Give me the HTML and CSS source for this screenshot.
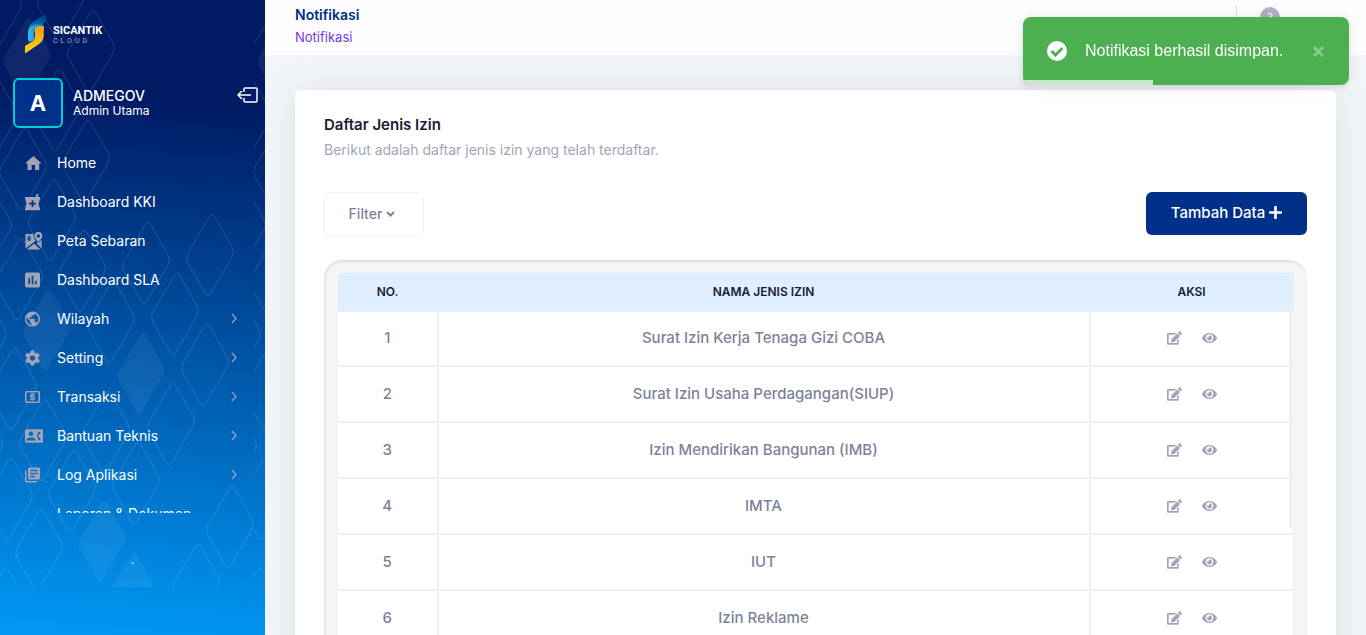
FILE: index.html
```html
<!DOCTYPE html>
<html lang="id">
<head>
<meta charset="utf-8">
<meta name="viewport" content="width=device-width, initial-scale=1">
<title>Daftar Jenis Izin</title>
<link rel="stylesheet" href="styles.css">
</head>
<body>
<svg class="defs" aria-hidden="true">
  <defs>
    <path id="diamond" d="M-1-38Q2-43 5-38L22-8Q25-3 22 2L1 38Q-2 43-5 38L-22 8Q-25 3-22-2Z"/>
    <clipPath id="tile-clip"><rect width="254" height="587"/></clipPath>
    <g id="tile" clip-path="url(#tile-clip)">
      <g class="line">
        <use href="#diamond" x="-2" y="8"/><use href="#diamond" x="61" y="0"/><use href="#diamond" x="91" y="51"/>
        <use href="#diamond" x="57" y="110"/><use href="#diamond" x="86" y="161"/><use href="#diamond" x="23" y="169"/>
        <use href="#diamond" x="-6" y="118"/><use href="#diamond" x="52" y="220"/><use href="#diamond" x="-12" y="228"/>
        <use href="#diamond" x="82" y="271"/><use href="#diamond" x="146" y="263"/><use href="#diamond" x="210" y="255"/>
        <use href="#diamond" x="19" y="279"/><use href="#diamond" x="175" y="314"/><use href="#diamond" x="111" y="322"/>
        <use href="#diamond" x="205" y="365"/><use href="#diamond" x="13" y="389"/><use href="#diamond" x="-17" y="337"/>
        <use href="#diamond" x="106" y="432"/><use href="#diamond" x="171" y="424"/><use href="#diamond" x="43" y="440"/>
        <use href="#diamond" x="-21" y="448"/><use href="#diamond" x="72" y="491"/><use href="#diamond" x="136" y="483"/>
        <use href="#diamond" x="9" y="499"/><use href="#diamond" x="39" y="550"/><use href="#diamond" x="230" y="527"/>
        <use href="#diamond" x="196" y="585"/><use href="#diamond" x="4" y="609"/>
      </g>
      <g class="solid">
        <use href="#diamond" x="27" y="58"/><use href="#diamond" x="47" y="330"/><use href="#diamond" x="141" y="373"/>
        <use href="#diamond" x="102" y="541"/><use href="#diamond" x="132" y="593"/>
      </g>
    </g>
    <symbol id="chevron" viewBox="0 0 6 11"><path d="M1 1l4 4.500-4 4.500" fill="none" stroke="currentColor" stroke-width="1.200"/></symbol>
    <symbol id="edit" viewBox="0 0 576 512"><path fill="currentColor" d="M402.600 83.200l90.200 90.200c3.800 3.800 3.800 10 0 13.800L274.400 405.600l-92.800 10.300c-12.400 1.400-22.900-9.100-21.500-21.500l10.300-92.800L388.800 83.200c3.800-3.800 10-3.800 13.800 0zm162-22.900l-48.800-48.800c-15.200-15.200-39.900-15.200-55.200 0l-35.400 35.400c-3.800 3.800-3.800 10 0 13.800l90.200 90.200c3.800 3.800 10 3.800 13.800 0l35.400-35.400c15.200-15.300 15.200-40 0-55.200zM384 346.200V448H64V128h229.800c3.200 0 6.200-1.300 8.500-3.500l40-40c7.600-7.600 2.200-20.500-8.500-20.500H48C21.500 64 0 85.500 0 112v352c0 26.500 21.500 48 48 48h352c26.500 0 48-21.500 48-48V306.200c0-10.700-12.900-16-20.500-8.500l-40 40c-2.200 2.300-3.500 5.300-3.500 8.500z"/></symbol>
    <symbol id="eye" viewBox="0 0 576 512"><path fill="currentColor" d="M572.520 241.400C518.290 135.590 410.930 64 288 64S57.680 135.640 3.480 241.410a32.350 32.350 0 0 0 0 29.190C57.710 376.410 165.070 448 288 448s230.320-71.640 284.520-177.410a32.350 32.350 0 0 0 0-29.190zM288 400a144 144 0 1 1 144-144 143.930 143.930 0 0 1-144 144zm0-240a95.310 95.310 0 0 0-25.310 3.790 47.850 47.850 0 0 1-66.900 66.900A95.780 95.780 0 1 0 288 160z"/></symbol>
    <linearGradient id="logo-dark" x1="1" y1="0" x2="0" y2="1"><stop offset="0" stop-color="#003a80"/><stop offset="1" stop-color="#0079b8"/></linearGradient>
    <linearGradient id="logo-blue"><stop offset="0" stop-color="#35bdf2"/><stop offset="1" stop-color="#0072c0"/></linearGradient>
    <linearGradient id="logo-gold" x1="0" y1="0" x2="0" y2="1"><stop offset="0" stop-color="#f59c1c"/><stop offset="1" stop-color="#ffd60a"/></linearGradient>
  </defs>
</svg>

<div class="app">
  <aside class="sidebar">
    <svg class="pattern" aria-hidden="true"><use href="#tile"/><use href="#tile" x="254"/></svg>

    <div class="brand">
      <svg class="brand-mark" viewBox="0 0 21 40" aria-hidden="true">
        <path fill="url(#logo-dark)" d="M21 0v8L9 13l-5 1q0-3 4-6z"/>
        <path fill="url(#logo-blue)" d="M3 18q0-5 6-7l9-2v3l-6 2q-3 2-3 7v5l-5 2q-1-2-1-5z"/>
        <path fill="url(#logo-gold)" d="M10 14l3-2h6l-.3 11q-.7 4-4 6.500L0 39.500V32l8-5q2-1.500 2-5z"/>
      </svg>
      <div class="brand-text"><span class="brand-name">SICANTIK</span><span class="brand-sub">CLOUD</span></div>
    </div>

    <div class="user">
      <div class="avatar">A</div>
      <div class="user-text"><span class="user-name">ADMEGOV</span><span class="user-role">Admin Utama</span></div>
      <button class="logout" type="button" aria-label="Keluar">
        <svg viewBox="0 0 21 16" fill="none" stroke="currentColor" stroke-width="1.500"><path d="M7 5V2q0-1 1-1h11q1 0 1 1v12q0 1-1 1H8q-1 0-1-1v-3M1 8h13M5 4L1 8l4 4"/></svg>
      </button>
    </div>

    <nav class="menu">
      <a class="item" href="#"><svg class="icon" viewBox="2 .7 21.600 21.600"><path d="M10 20v-6h4v6h5v-8h3L12 3 2 12h3v8z"/></svg><span>Home</span></a>
      <a class="item" href="#"><svg class="icon" viewBox="3 .2 21.600 21.600"><path d="M21 5h-2.640l1.140-3.140L17.150 1l-1.460 4H3v2l2 6-2 6v2h18v-2l-2-6 2-6V5zm-5 9h-3v3h-2v-3H8v-2h3V9h2v3h3v2z"/></svg><span>Dashboard KKI</span></a>
      <a class="item" href="#"><svg class="icon" viewBox="0 0 18 19"><path fill-rule="evenodd" d="M1 2h7.500c-.2 3.500.7 5 2.300 7.200L0 17.500V3q0-1 1-1zM5 4.300c-1.700-1.200-3.300.2-2.600 1.900-1 1-.6 3 .9 3.200 1.900.2 3-1.700 1.900-3.100.6-.5.5-1.300-.2-2zM4 5a.7.700 0 1 1 0 1.400A.7.700 0 0 1 4 5zm-.2 2.400a.7.700 0 1 1 0 1.400.7.700 0 0 1 0-1.400zM9 12.200l6.800 6.300H1.500zM13.600 12l3.400-4v9.500L11.500 12l1-1zM13.600 0A4.200 4.200 0 0 1 17.800 4.200C17.800 7 14.500 8.500 13.600 11.500 12.700 8.500 9.400 7 9.400 4.200A4.200 4.200 0 0 1 13.600 0zm0 2.400a1.800 1.800 0 1 0 0 3.600 1.800 1.800 0 0 0 0-3.600z"/></svg><span>Peta Sebaran</span></a>
      <a class="item" href="#"><svg class="icon" viewBox="3 1.200 21.600 21.600"><path d="M19 3H5c-1.100 0-2 .9-2 2v14c0 1.100.9 2 2 2h14c1.100 0 2-.9 2-2V5c0-1.100-.9-2-2-2zM9 17H7v-7h2v7zm4 0h-2V7h2v10zm4 0h-2v-4h2v4z"/></svg><span>Dashboard SLA</span></a>
      <a class="item" href="#"><svg class="icon" viewBox="2 0 24 24"><path d="M12 2C6.480 2 2 6.480 2 12s4.480 10 10 10 10-4.480 10-10S17.520 2 12 2zm-1 17.930c-3.950-.49-7-3.850-7-7.930 0-.62.080-1.210.21-1.790L9 15v1c0 1.100.9 2 2 2v1.930zm6.900-2.540c-.26-.81-1-1.390-1.900-1.390h-1v-3c0-.55-.45-1-1-1H8v-2h2c.55 0 1-.45 1-1V7h2c1.100 0 2-.9 2-2v-.41c2.930 1.190 5 4.060 5 7.410 0 2.080-.8 3.970-2.100 5.390z"/></svg><span>Wilayah</span><svg class="chevron"><use href="#chevron"/></svg></a>
      <a class="item" href="#"><svg class="icon" viewBox="2 0 24 24"><path d="M19.430 12.980c.04-.32.07-.64.07-.98s-.03-.66-.07-.98l2.110-1.650c.19-.15.24-.42.12-.64l-2-3.460c-.12-.22-.39-.3-.61-.22l-2.490 1c-.52-.4-1.080-.73-1.690-.98l-.38-2.650C14.460 2.180 14.250 2 14 2h-4c-.25 0-.46.18-.49.42l-.38 2.650c-.61.25-1.170.59-1.690.98l-2.490-1c-.23-.09-.49 0-.61.22l-2 3.460c-.13.22-.07.49.12.64l2.110 1.650c-.04.32-.07.65-.07.98s.03.66.07.98l-2.110 1.650c-.19.15-.24.42-.12.64l2 3.460c.12.22.39.3.61.22l2.490-1c.52.4 1.080.73 1.690.98l.38 2.650c.03.24.24.42.49.42h4c.25 0 .46-.18.49-.42l.38-2.650c.61-.25 1.170-.59 1.690-.98l2.490 1c.23.09.49 0 .61-.22l2-3.460c.12-.22.07-.49-.12-.64l-2.110-1.650zM12 15.500c-1.930 0-3.500-1.570-3.500-3.500s1.570-3.500 3.500-3.500 3.500 1.570 3.500 3.500-1.570 3.500-3.500 3.500z"/></svg><span>Setting</span><svg class="chevron"><use href="#chevron"/></svg></a>
      <a class="item" href="#"><svg class="icon" viewBox="2 0 24 24"><path d="M11 17h2v-1h1c.55 0 1-.45 1-1v-3c0-.55-.45-1-1-1h-3v-1h4V8h-2V7h-2v1h-1c-.55 0-1 .45-1 1v3c0 .55.45 1 1 1h3v1H9v2h2v1zm9-13H4c-1.110 0-1.990.89-1.990 2L2 18c0 1.110.89 2 2 2h16c1.110 0 2-.89 2-2V6c0-1.110-.89-2-2-2zm0 14H4V6h16v12z"/></svg><span>Transaksi</span><svg class="chevron"><use href="#chevron"/></svg></a>
      <a class="item" href="#"><svg class="icon" viewBox="0 0 24 24"><path d="M22 3H2C.9 3 0 3.900 0 5v14c0 1.100.9 2 2 2h20c1.100 0 1.990-.9 1.990-2L24 5c0-1.100-.9-2-2-2zM8 6c1.660 0 3 1.340 3 3s-1.340 3-3 3-3-1.340-3-3 1.340-3 3-3zm6 12H2v-1c0-2 4-3.100 6-3.100s6 1.100 6 3.100v1zm3.850-4h1.640L21 16l-1.990 1.990c-1.310-.98-2.280-2.380-2.730-3.990-.18-.64-.28-1.310-.28-2s.1-1.360.28-2c.45-1.620 1.420-3.010 2.730-3.990L21 8l-1.510 2h-1.640c-.22.63-.35 1.300-.35 2s.13 1.370.35 2z"/></svg><span>Bantuan Teknis</span><svg class="chevron"><use href="#chevron"/></svg></a>
      <a class="item" href="#"><svg class="icon" viewBox="2 0 24 24"><path d="M4 6H2v14c0 1.100.9 2 2 2h14v-2H4V6zm16-4H8c-1.100 0-2 .9-2 2v12c0 1.100.9 2 2 2h12c1.100 0 2-.9 2-2V4c0-1.100-.9-2-2-2zm-1 9H9V9h10v2zm-4 4H9v-2h6v2zm4-8H9V5h10v2z"/></svg><span>Log Aplikasi</span><svg class="chevron"><use href="#chevron"/></svg></a>
      <a class="item" href="#"><span class="icon"></span><span>Laporan &amp; Dokumen</span></a>
    </nav>
    <div class="sidebar-foot">.</div>
  </aside>

  <div class="page">
    <header class="topbar">
      <div class="crumbs">
        <h1>Notifikasi</h1>
        <a href="#">Notifikasi</a>
      </div>
      <div class="topbar-tools"><button class="help" type="button">?</button></div>
    </header>

    <main class="content">
      <section class="card">
        <h2>Daftar Jenis Izin</h2>
        <p class="lead">Berikut adalah daftar jenis izin yang telah terdaftar.</p>
        <div class="toolbar">
          <button class="btn-filter" type="button">Filter
            <svg viewBox="0 0 9 6" aria-hidden="true"><path d="M1 1l3.500 3.500L8 1" fill="none" stroke="currentColor" stroke-width="2"/></svg>
          </button>
          <button class="btn-add" type="button">Tambah Data
            <svg viewBox="0 0 12 12" aria-hidden="true"><path d="M6 1v10M1 6h10" stroke="currentColor" stroke-width="2.400" stroke-linecap="round"/></svg>
          </button>
        </div>
        <div class="table-frame">
          <div class="table-scroll">
            <table>
              <colgroup><col class="col-no"><col><col class="col-act"></colgroup>
              <thead><tr><th>NO.</th><th>NAMA JENIS IZIN</th><th>AKSI</th></tr></thead>
              <tbody>
                <tr><td>1</td><td>Surat Izin Kerja Tenaga Gizi COBA</td><td><div class="actions"><button type="button" aria-label="Ubah"><svg><use href="#edit"/></svg></button><button type="button" aria-label="Lihat"><svg><use href="#eye"/></svg></button></div></td></tr>
                <tr><td>2</td><td>Surat Izin Usaha Perdagangan(SIUP)</td><td><div class="actions"><button type="button" aria-label="Ubah"><svg><use href="#edit"/></svg></button><button type="button" aria-label="Lihat"><svg><use href="#eye"/></svg></button></div></td></tr>
                <tr><td>3</td><td>Izin Mendirikan Bangunan (IMB)</td><td><div class="actions"><button type="button" aria-label="Ubah"><svg><use href="#edit"/></svg></button><button type="button" aria-label="Lihat"><svg><use href="#eye"/></svg></button></div></td></tr>
                <tr><td>4</td><td>IMTA</td><td><div class="actions"><button type="button" aria-label="Ubah"><svg><use href="#edit"/></svg></button><button type="button" aria-label="Lihat"><svg><use href="#eye"/></svg></button></div></td></tr>
                <tr><td>5</td><td>IUT</td><td><div class="actions"><button type="button" aria-label="Ubah"><svg><use href="#edit"/></svg></button><button type="button" aria-label="Lihat"><svg><use href="#eye"/></svg></button></div></td></tr>
                <tr><td>6</td><td>Izin Reklame</td><td><div class="actions"><button type="button" aria-label="Ubah"><svg><use href="#edit"/></svg></button><button type="button" aria-label="Lihat"><svg><use href="#eye"/></svg></button></div></td></tr>
              </tbody>
            </table>
          </div>
        </div>
      </section>
    </main>
  </div>
</div>

<div class="toast" role="status">
  <svg class="toast-icon" viewBox="0 0 20 20" aria-hidden="true"><circle cx="10" cy="10" r="10" fill="#fff"/><path d="M4.500 10l4 4 7-7" fill="none" stroke="#4caf50" stroke-width="3"/></svg>
  <span class="toast-text">Notifikasi berhasil disimpan.</span>
  <button class="toast-close" type="button" aria-label="Tutup"><svg viewBox="0 0 11 11"><path d="M1 1l9 9M10 1l-9 9" stroke="currentColor" stroke-width="2.800"/></svg></button>
  <div class="toast-progress"></div>
</div>
</body>
</html>
```
FILE: styles.css
```css
* { box-sizing: border-box; }
body {
  margin: 0;
  font-family: Inter, "Noto Sans", sans-serif;
  font-size: 14px;
  color: #7e8299;
  background: #f3f6f9;
}
button { font: inherit; color: inherit; padding: 0; border: 0; background: none; cursor: pointer; }
a { text-decoration: none; }
h1, h2, p { margin: 0; }
.defs { position: absolute; width: 0; height: 0; }

.app { display: flex; height: 100vh; overflow: hidden; }

/* Sidebar */
.sidebar {
  position: relative;
  display: flex;
  flex-direction: column;
  flex: 0 0 265px;
  overflow: hidden;
  color: #fff;
  background: linear-gradient(185deg, #001b64 17%, #0098f4 99%);
}
.pattern { position: absolute; inset: 0; width: 100%; height: 100%; }
.line { fill: none; stroke: #fff; stroke-opacity: .14; }
.solid { fill: #fff; fill-opacity: .06; }

.brand { position: relative; display: flex; gap: 7px; padding: 14px 0 0 25px; }
.brand-mark { width: 21px; height: 40px; }
.brand-text { display: flex; flex-direction: column; padding-top: 10px; font-family: Roboto, sans-serif; }
.brand-name { font-size: 11px; line-height: 13px; font-weight: 700; }
.brand-sub { font-size: 7px; line-height: 8px; letter-spacing: 3px; color: #a6aecb; }

.user { position: relative; display: flex; padding: 24px 7px 15px 13px; }
.avatar {
  display: grid;
  place-items: center;
  width: 50px;
  height: 50px;
  border: 2px solid #00d0d6;
  border-radius: 6px;
  background: #003087;
  font-size: 22px;
  font-weight: 700;
}
.user-text { display: flex; flex-direction: column; flex: 1; padding: 10px 0 0 10px; }
.user-name { font-size: 14px; line-height: 16px; font-weight: 500; }
.user-role { font-size: 12px; line-height: 14px; }
.logout { align-self: flex-start; margin-top: 9px; }
.logout svg { display: block; width: 21px; height: 16px; }

.menu { position: relative; flex: 1; min-height: 0; overflow: hidden; }
.item { display: flex; align-items: center; height: 39px; padding: 0 28px 0 25px; font-size: 14px; color: #fff; }
.icon { flex: none; width: 18px; height: 18px; margin-right: 14px; fill: #a2a3b7; }
.chevron { width: 6px; height: 11px; margin-left: auto; color: #a2a3b7; }
.sidebar-foot { position: relative; flex: 0 0 122px; padding-top: 38px; line-height: 16px; text-align: center; opacity: .8; }

/* Page */
.page { flex: 1; min-width: 0; display: flex; flex-direction: column; }
.topbar { flex: 0 0 55px; display: flex; justify-content: space-between; padding: 5px 86px 0 30px; background: #fdfdfe; }
.crumbs h1 { font-size: 14px; line-height: 20px; font-weight: 600; color: #003087; }
.crumbs a { display: block; font-size: 13px; line-height: 24px; color: #7239ea; }
.topbar-tools { height: 40px; padding: 2px 0 0 23px; border-left: 1px solid #dcdde5; }
.help { width: 20px; height: 20px; border-radius: 50%; background: #b1b0c5; color: #fff; font-size: 11px; }

.content { flex: 1; min-height: 0; padding: 35px 30px 0; overflow: hidden; }
.card { padding: 24px 29px 30px; border-radius: 5px; background: #fff; box-shadow: 0 0 35px rgba(60, 80, 100, .13); }
.card h2 { font-size: 15px; line-height: 22px; font-weight: 600; color: #181c32; }
.lead { margin-top: 4px; font-size: 14px; line-height: 20px; color: #a1a5b7; }
.toolbar { display: flex; justify-content: space-between; align-items: flex-start; margin: 32px 0 23px; }
.btn-filter, .btn-add { display: flex; align-items: center; justify-content: center; padding-bottom: 2px; font-weight: 500; border-radius: 6px; }
.btn-filter { gap: 4px; width: 100px; height: 45px; padding-right: 4px; border: 1px solid #eff2f5; }
.btn-filter svg { width: 9px; height: 6px; }
.btn-add { gap: 4px; width: 161px; height: 43px; font-size: 15px; color: #fff; background: #003087; }
.btn-add svg { width: 13px; height: 13px; }

.table-frame { padding: 13px; border-radius: 18px; background: #f5f5f5; box-shadow: inset 1px 2px 3px rgba(0, 0, 0, .09); }
.table-scroll { position: relative; background: #fff; }
.table-scroll::after {
  content: "";
  position: absolute;
  top: 0;
  right: 2px;
  width: 2px;
  height: 255px;
  background: #e9ecf1;
}
table { width: 100%; table-layout: fixed; border-collapse: collapse; text-align: center; }
.col-no { width: 100px; }
.col-act { width: 204px; }
th { height: 38px; padding: 0; font-size: 12px; font-weight: 600; color: #181c32; background: #e0efff; }
td { height: 56px; padding: 0 0 1px; font-size: 15px; font-weight: 500; border: 2px solid #eff2f5; border-top-width: 1px; }
tbody tr:first-child td { height: 55px; }
td:first-child { border-left-width: 1px; }
td:last-child { border-right-width: 1px; }
.actions { display: flex; justify-content: center; gap: 20px; }
.actions button { display: flex; color: #a1a2b8; }
.actions svg { width: 15px; height: 14px; }

/* Toast */
.toast {
  position: fixed;
  top: 17px;
  right: 17px;
  display: flex;
  align-items: center;
  width: 326px;
  height: 68px;
  padding: 0 25px 0 24px;
  overflow: hidden;
  border-radius: 8px;
  color: #fff;
  background: #4caf50;
  box-shadow: 0 1px 10px rgba(0, 0, 0, .1), 0 2px 15px rgba(0, 0, 0, .05);
  font: 16px "Liberation Sans", Arial, sans-serif;
}
.toast-icon { width: 20px; height: 20px; margin-right: 18px; }
.toast-text { line-height: 20px; }
.toast-close { margin-left: auto; color: #88ca8b; }
.toast-close svg { display: block; width: 11px; height: 11px; }
.toast-progress { position: absolute; left: 0; bottom: 0; width: 40%; height: 5px; background: #cae7cb; }
```
